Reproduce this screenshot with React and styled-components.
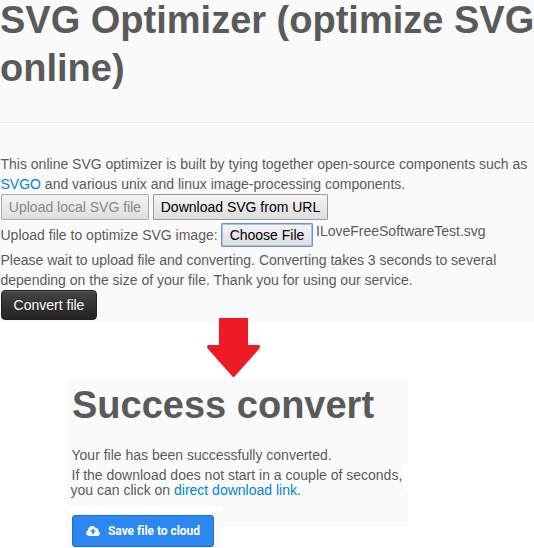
import React from "react";
import styled, { createGlobalStyle } from "styled-components";

const GlobalStyle = createGlobalStyle`
  * { box-sizing: border-box; }
  body {
    margin: 0;
    background: #fff;
    color: #5a5a5a;
    font: 14px/20px "Liberation Sans", Arial, sans-serif;
    overflow: hidden;
  }
`;

const Page = styled.main`
  display: flex;
  flex-direction: column;
  width: 534px;
  height: 548px;
  overflow: hidden;
`;

const UploadPanel = styled.section`
  height: 322px;
  padding-left: 1px;
  background: #fafafa;
  white-space: nowrap;
`;

const Title = styled.h1`
  margin: 0;
  font-size: 38px;
  line-height: 48px;
  font-weight: 700;
  color: #5a5a5a;
`;

const MainTitle = styled(Title)`
  height: 126px;
  margin: -4px 0 0 -1px;
`;

const Divider = styled.hr`
  height: 2px;
  margin: 0 0 30px;
  border: 0;
  border-top: 1px solid #eee;
  border-bottom: 1px solid #fff;
`;

const TextLine = styled.div`
  height: ${(p) => p.$height || 20}px;
  margin-left: ${(p) => p.$shift ?? -0.5}px;
  white-space: nowrap;
`;

const Link = styled.a`
  color: #0088cc;
  text-decoration: none;
`;

const ButtonRow = styled.div`
  display: flex;
  gap: 4px;
  height: 29px;
`;

const NativeButton = styled.button`
  width: ${(p) => p.$width}px;
  height: 26px;
  padding: 0;
  border: 1px solid #999;
  border-radius: 1px;
  background: linear-gradient(#f4f4f4, #dedede);
  color: #000;
  font: 14px/20px "Liberation Sans", Arial, sans-serif;
  white-space: nowrap;

  &:disabled {
    color: #888;
    border-color: #aaa;
  }
`;

const FileButton = styled(NativeButton)`
  height: 24px;
  border: 1px solid #6a93d8;
  box-shadow: inset 0 0 0 1px #a9c2ec;
`;

const FileRow = styled.div`
  display: flex;
  height: 27px;
`;

const FileLabel = styled.label`
  width: 220.5px;
  margin-left: -0.5px;
  padding-top: 2px;
`;

const FileName = styled.span`
  margin: -2px 0 0 3px;
`;

const ConvertButton = styled.button`
  display: block;
  width: 96px;
  height: 30px;
  padding: 0;
  border: 1px solid #222;
  border-radius: 4px;
  background: linear-gradient(#444, #222);
  box-shadow: inset 0 1px 0 #5a5a5a;
  color: #fff;
  font: 14px/20px "Liberation Sans", Arial, sans-serif;
  text-shadow: 0 -1px 0 rgba(0, 0, 0, 0.25);
`;

const Arrow = styled.svg`
  display: block;
  width: 54px;
  height: 60px;
  margin: -4px 0 0 207px;
  flex: none;
`;

const ResultPanel = styled.section`
  position: relative;
  width: 341px;
  height: 149px;
  margin-left: 67px;
  padding: 3px 0 0 4px;
  background: #fafafa;
  flex: none;
`;

const EdgePatch = styled.span`
  position: absolute;
  top: 87px;
  right: 0;
  width: 5px;
  height: 27px;
  background: #fff;
`;

const ResultTitle = styled(Title)`
  height: 64px;
  margin-left: 1px;
`;

const SavePanel = styled.section`
  position: relative;
  width: 155px;
  height: 41px;
  margin: -20px 0 0 67px;
  padding: 2px 0 0 5px;
  border-top: 6px solid #fff;
  background: #fafafa;
  flex: none;
`;

const SaveButton = styled.button`
  display: flex;
  align-items: center;
  width: 142px;
  height: 32px;
  padding: 0 0 0 13px;
  gap: 8px;
  border: 1px solid #1f6fc4;
  border-radius: 3px;
  background: #2d87f0;
  color: #fff;
  font: 700 12px/18px Roboto, "Liberation Sans", sans-serif;
  letter-spacing: -0.04px;
  white-space: nowrap;
`;

const CloudIcon = () => (
  <svg width="14" height="12" viewBox="0 0 14 12" aria-hidden="true">
    <path
      fill="#fff"
      fillRule="evenodd"
      d="M3.3 11C1.4 11 .2 9.8.2 8.1c0-1.3.8-2.4 2-2.8C2.1 2.9 3.8 1 6.1 1c1.6 0 3 .9 3.6 2.3 1.4-.4 2.8.6 2.8 2.1 0 .4-.1.7-.2 1 1 .3 1.6 1.1 1.6 2.2 0 1.3-1 2.4-2.4 2.4H3.3ZM7 3.8 4.1 6.7h2v2.4h1.8V6.7h2L7 3.8Z"
    />
  </svg>
);

export default function App() {
  return (
    <Page>
      <GlobalStyle />
      <UploadPanel>
        <MainTitle>
          SVG Optimizer (optimize SVG
          <br />
          online)
        </MainTitle>
        <Divider />
        <TextLine>
          This online SVG optimizer is built by tying together open-source components such as
        </TextLine>
        <TextLine>
          <Link>SVGO</Link> and various unix and linux image-processing components.
        </TextLine>
        <ButtonRow>
          <NativeButton $width={148} disabled>Upload local SVG file</NativeButton>
          <NativeButton $width={175}>Download SVG from URL</NativeButton>
        </ButtonRow>
        <FileRow>
          <FileLabel>Upload file to optimize SVG image:</FileLabel>
          <FileButton $width={92}>Choose File</FileButton>
          <FileName>ILoveFreeSoftwareTest.svg</FileName>
        </FileRow>
        <TextLine>
          Please wait to upload file and converting. Converting takes 3 seconds to several
        </TextLine>
        <TextLine>
          depending on the size of your file. Thank you for using our service.
        </TextLine>
        <ConvertButton>Convert file</ConvertButton>
      </UploadPanel>
      <Arrow viewBox="0 0 54 60" aria-hidden="true">
        <path
          fill="#ed1c24"
          d="M13 0H40Q41 0 41 1V27H52Q54 28 52 31L28 58Q26.500 60 25 58L1 31Q-1 28 1 27H12V1Q12 0 13 0Z"
        />
      </Arrow>
      <ResultPanel>
        <EdgePatch />
        <ResultTitle>Success convert</ResultTitle>
        <TextLine $shift={0.5}>Your file has been successfully converted.</TextLine>
        <TextLine $shift={0.5} $height={15}>
          If the download does not start in a couple of seconds,
        </TextLine>
        <TextLine>
          you can click on <Link>direct download link.</Link>
        </TextLine>
      </ResultPanel>
      <SavePanel>
        <SaveButton>
          <CloudIcon />
          Save file to cloud
        </SaveButton>
      </SavePanel>
    </Page>
  );
}
